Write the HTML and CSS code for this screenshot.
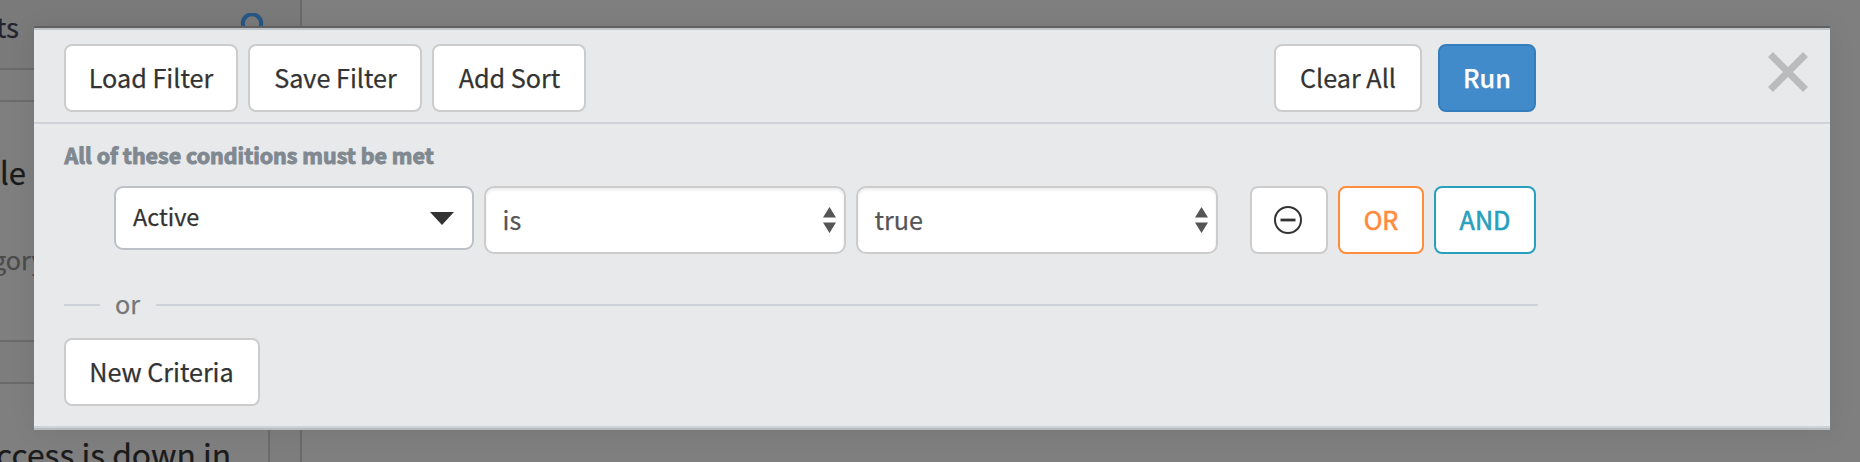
FILE: index.html
```html
<!DOCTYPE html>
<html lang="en">
<head>
<meta charset="utf-8">
<title>Filter</title>
<link rel="stylesheet" href="styles.css">
</head>
<body>
<div class="page">
  <aside class="sidebar">
    <div class="sidebar-head">
      <span class="sidebar-title">ts</span>
      <svg class="search" width="32" height="32" viewBox="0 0 32 32" fill="none" stroke="#265784" stroke-width="4"><circle cx="15" cy="10.500" r="9.200"/><path d="M9 18 3 26"/></svg>
    </div>
    <div class="sidebar-gap"></div>
    <div class="record"><span class="record-name">le</span><span class="record-meta">gory</span></div>
    <div class="note"><span>ccess is down in</span></div>
  </aside>
</div>
<section class="dialog">
  <header class="toolbar">
    <div class="toolbar-main">
      <button class="btn load">Load Filter</button>
      <button class="btn save">Save Filter</button>
      <button class="btn sort">Add Sort</button>
      <button class="btn clear">Clear All</button>
      <button class="btn run">Run</button>
    </div>
    <svg class="close" width="40" height="40" viewBox="0 0 40 40" stroke="#b9bbbd" stroke-width="7"><path d="M2.500 2.500l35 35M37.500 2.500l-35 35"/></svg>
  </header>
  <div class="body">
    <h2 class="heading">All of these conditions must be met</h2>
    <div class="criteria">
      <div class="combo"><span>Active</span><svg width="24" height="13" viewBox="0 0 24 13"><path d="M0 0h24L12 13z" fill="#333"/></svg></div>
      <div class="select"><span>is</span><svg width="13" height="26" viewBox="0 0 13 26"><path d="M0 10.500h13L6.500 0zM0 15.500h13L6.500 26z" fill="#555"/></svg></div>
      <div class="select"><span>true</span><svg width="13" height="26" viewBox="0 0 13 26"><path d="M0 10.500h13L6.500 0zM0 15.500h13L6.500 26z" fill="#555"/></svg></div>
      <button class="btn minus"><svg width="28" height="28" viewBox="0 0 28 28" fill="none" stroke="#333"><circle cx="14" cy="14" r="13" stroke-width="2"/><path d="M6.500 14h15" stroke-width="2.800"/></svg></button>
      <button class="btn or">OR</button>
      <button class="btn and">AND</button>
    </div>
    <div class="divider"><span>or</span></div>
    <button class="btn new">New Criteria</button>
  </div>
</section>
</body>
</html>
```
FILE: styles.css
```css
* { box-sizing: border-box; }
body {
  margin: 0;
  width: 1860px;
  height: 462px;
  overflow: hidden;
  background: #7f7f7f;
  font-family: "Noto Sans CJK SC", "Noto Sans", sans-serif;
  font-size: 25.2px;
  line-height: 36px;
  color: #333;
  -webkit-text-stroke: .25px currentColor;
}
.page { height: 462px; overflow: hidden; }
.sidebar { width: 302px; height: 462px; overflow: hidden; border-right: 2px solid #6a6a6a; background: #7d7d7d; white-space: nowrap; }
.sidebar-head { height: 70px; display: flex; justify-content: space-between; padding: 8px 31px 0 0; border-bottom: 2px solid #6b6b6b; background: #7a7a7a; }
.sidebar-title { color: #22232f; font-size: 27.500px; margin-left: -4px; }
.search { margin-top: 5px; }
.sidebar-gap { height: 30px; }
.record { height: 242px; border: solid #6b6b6b; border-width: 2px 0; background: #7f7f7f; display: flex; flex-direction: column; }
.record-name { margin: 50px 0 0; color: #1a1a1a; font-size: 31px; line-height: 40px; }
.record-meta { margin: 49px 0 0 -8px; color: #4b4b4b; font-size: 25.200px; }
.note { margin-top: 40px; width: 270px; height: 90px; border: solid #6b6b6b; border-width: 2px 2px 0 0; background: #7f7f7f; padding-top: 49px; color: #1a1a1a; font-size: 31.800px; line-height: 40px; }
.note span { margin-left: -4px; }
.dialog {
  position: absolute;
  left: 34px;
  top: 28px;
  width: 1796px;
  height: 402px;
  background: #e7e9eb;
  border-top: 2px solid #bfc4c9;
  border-bottom: 2px solid #b9bdc0;
  box-shadow: 0 -2px 0 0 #606060, 0 0 24px rgba(0,0,0,.08);
}
.toolbar { height: 94px; border-bottom: 2px solid #cdd3d9; display: flex; justify-content: space-between; padding: 14px 22px 0 30px; }
.toolbar-main { width: 1472px; display: flex; gap: 10px; }
.close { margin-top: 8px; }
.btn {
  height: 68px;
  padding: 0 0 2px;
  border: 2px solid #ccc;
  border-radius: 8px;
  background: #fff;
  color: #333;
  font: inherit;
  -webkit-text-stroke: inherit;
  display: flex;
  align-items: center;
  justify-content: center;
  white-space: nowrap;
}
.load, .save { width: 174px; }
.save, .sort { padding-left: 1px; }
.sort { width: 154px; }
.clear { width: 148px; margin-left: auto; }
.run { width: 98px; margin-left: 6px; background: #428bca; border-color: #357ebd; color: #fff; font-weight: 500; }
.body { height: 304px; padding: 13px 30px 0; border-bottom: 2px solid #cdd3d8; }
.heading { margin: 0 0 0 .6px; font-size: 21.450px; line-height: 36px; font-weight: 700; color: #808890; -webkit-text-stroke: 1px #808890; }
.criteria { margin: 13px 0 0 50px; width: 1422px; display: flex; gap: 10px; align-items: flex-start; }
.combo, .select { display: flex; justify-content: space-between; align-items: center; background: #fff; }
.combo { width: 360px; height: 64px; border: 2px solid #bcc0c7; border-radius: 9px; padding: 0 18px 4px 17px; font-size: 23.400px; }
.combo svg { margin-top: 5px; }
.select { width: 362px; height: 68px; border: 2px solid #ccc; border-radius: 10px; padding: 0 8px 2px 16.500px; color: #555; box-shadow: inset 0 2px 3px rgba(0,0,0,.08); }
.select svg { margin-top: 2px; }
.minus { width: 78px; margin-left: 22px; padding: 0 2px 0 0; }
.or { width: 86px; color: #ff8b3d; border-color: #ff8b3d; -webkit-text-stroke-width: .6px; }
.and { width: 102px; color: #27a0be; border-color: #27a0be; -webkit-text-stroke-width: .6px; }
.divider { margin-top: 31px; width: 1474px; height: 36px; display: flex; align-items: center; color: #777; }
.divider::before, .divider::after { content: ""; height: 2px; background: #cdd3d9; margin-top: 4px; }
.divider::before { width: 36px; }
.divider::after { flex: 1; }
.divider span { width: 55px; margin-right: 1px; text-align: center; }
.new { width: 196px; margin-top: 17px; padding-right: 1px; letter-spacing: -.05px; }
```
